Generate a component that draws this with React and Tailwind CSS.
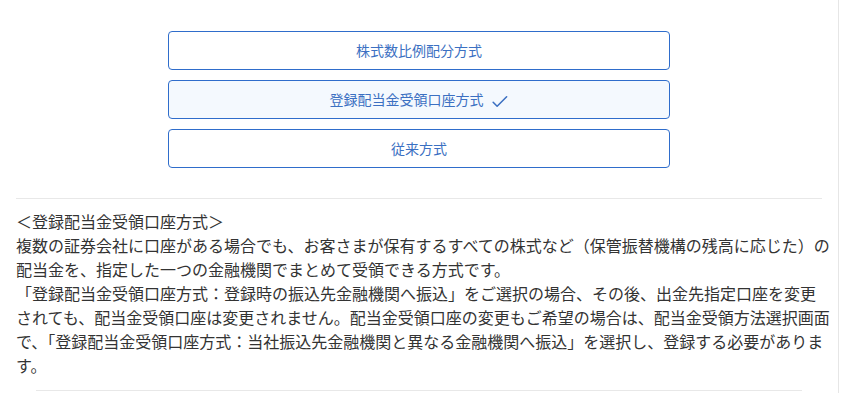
import React from "react";

const methods = [
  { label: "株式数比例配分方式", selected: false },
  { label: "登録配当金受領口座方式", selected: true },
  { label: "従来方式", selected: false },
];

const bodyLines = [
  "＜登録配当金受領口座方式＞",
  "複数の証券会社に口座がある場合でも、お客さまが保有するすべての株式など（保管振替機構の残高に応じた）の",
  "配当金を、指定した一つの金融機関でまとめて受領できる方式です。",
  "「登録配当金受領口座方式：登録時の振込先金融機関へ振込」をご選択の場合、その後、出金先指定口座を変更",
  "されても、配当金受領口座は変更されません。配当金受領口座の変更もご希望の場合は、配当金受領方法選択画面",
  "で、「登録配当金受領口座方式：当社振込先金融機関と異なる金融機関へ振込」を選択し、登録する必要がありま",
  "す。",
];

const CheckIcon = () => (
  <svg
    width="19"
    height="19"
    viewBox="0 0 24 24"
    fill="none"
    stroke="currentColor"
    strokeWidth="2"
    strokeLinecap="round"
    strokeLinejoin="round"
    className="ml-[6px] mt-[4px]"
  >
    <path d="M4 13l5 5L21 6" />
  </svg>
);

const App = () => {
  return (
    <div
      className="w-[839px] min-h-[393px] bg-white border-r border-[#e6e6e6] text-[#333333] overflow-hidden"
      style={{ fontFamily: '"Noto Sans CJK JP", "Noto Sans", sans-serif' }}
    >
      <div className="px-4">
        <div className="flex flex-col gap-[10px] pt-[31px] items-center">
          {methods.map((m) => (
            <button
              key={m.label}
              type="button"
              className={
                "w-[502px] h-[39px] rounded-[4px] border border-[#2f6dcb] flex items-center justify-center text-[14px] text-[#3b70c2] " +
                (m.selected ? "bg-[#f4f9fe]" : "bg-white")
              }
            >
              <span>{m.label}</span>
              {m.selected ? <CheckIcon /> : null}
            </button>
          ))}
        </div>
        <div className="mt-[30px] border-t border-[#e8e8e8]" />
        <div className="-mr-4 pt-[10px] pb-[13px] text-[16px] leading-[24px]">
          {bodyLines.map((line, i) => (
            <p key={i} className="whitespace-nowrap">
              {line}
            </p>
          ))}
        </div>
      </div>
      <div className="mx-9 border-t border-[#e8e8e8]" />
    </div>
  );
};

export default App;
